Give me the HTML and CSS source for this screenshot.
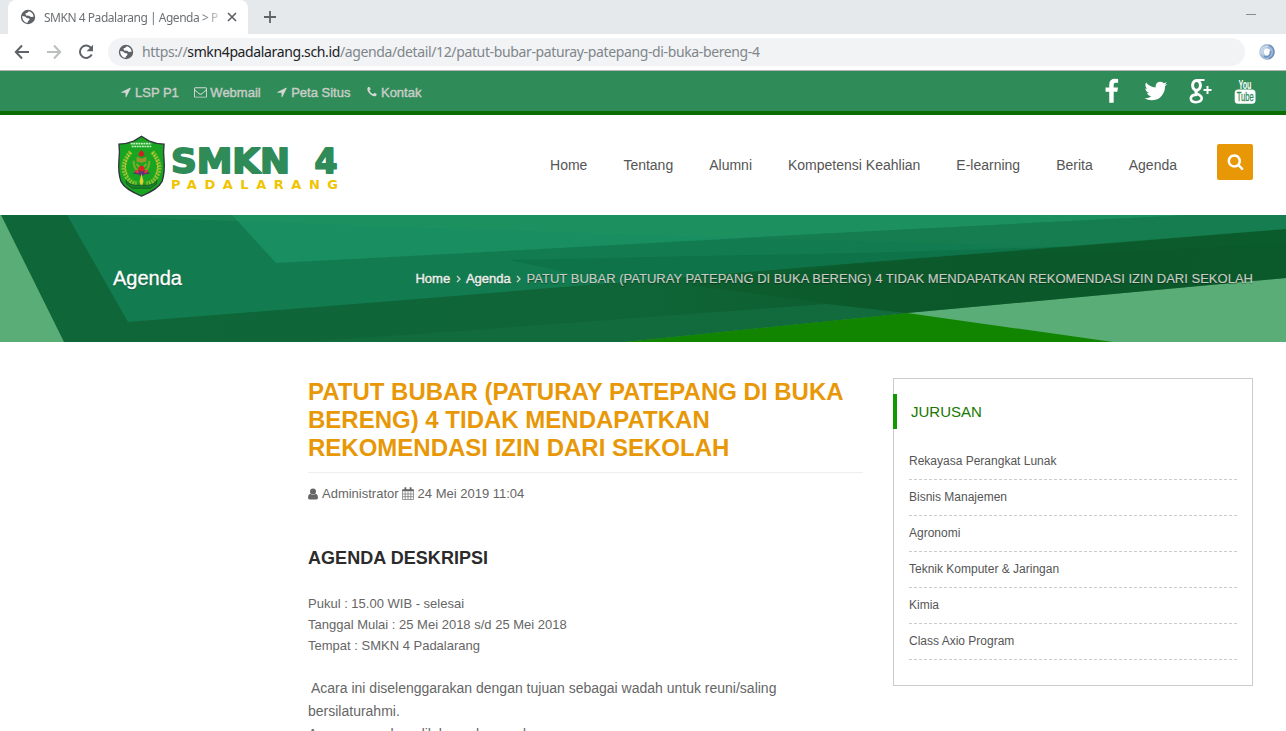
FILE: index.html
```html
<!DOCTYPE html>
<html lang="id">
<head>
<meta charset="utf-8">
<title>SMKN 4 Padalarang | Agenda</title>
<link rel="stylesheet" href="styles.css">
</head>
<body>
<svg class="defs" aria-hidden="true">
  <symbol id="globe" viewBox="0 0 16 16"><circle cx="8" cy="8" r="7.200" fill="#5f6368"/><path d="M2.200 7 5 7.600l2 1.600h2l.6 1.500-1.600 1.500-.5 1.600C4.600 13.700 2.200 11 2.200 7ZM8.800 2.200 7.400 3.800 5.400 4.600l.6 1.800 3.200.4 1.600 1.200 2.800-.2C13.500 5 11.500 2.600 8.800 2.200Z" fill="#fff"/></symbol>
  <symbol id="arrow" viewBox="0 0 1792 1792"><path d="M1593 349l-640 1280q-17 35-57 35-5 0-15-2-22-5-35.500-22.500t-13.500-39.500v-576h-576q-22 0-39.500-13.500t-22.500-35.500 4-42 29-30l1280-640q13-7 29-7 27 0 45 19 15 14 18.500 34.500t-6.500 39.500z"/></symbol>
  <symbol id="mail" viewBox="0 0 1792 1792"><path d="M1664 1504v-768q-32 36-69 66-268 206-426 338-51 43-83 67t-86.500 48.500-102.500 24.500h-2q-48 0-102.500-24.500t-86.500-48.500-83-67q-158-132-426-338-37-30-69-66v768q0 13 9.500 22.500t22.500 9.500h1472q13 0 22.500-9.500t9.500-22.500zm0-1051v-24.500l-.5-13-3-12.500-5.500-9-9-7.500-14-2.500h-1472q-13 0-22.500 9.500t-9.500 22.500q0 168 147 284 193 152 401 317 6 5 35 29.500t46 37.500 44.500 31.500 50.500 27.500 43 9h2q20 0 43-9t50.500-27.500 44.500-31.500 46-37.500 35-29.500q208-165 401-317 54-43 100.500-115.500t46.500-131.500zm128-37v1088q0 66-47 113t-113 47h-1472q-66 0-113-47t-47-113v-1088q0-66 47-113t113-47h1472q66 0 113 47t47 113z"/></symbol>
  <symbol id="phone" viewBox="0 0 1792 1792"><path d="M1600 1240q0 27-10 70.500t-21 68.500q-21 50-122 106-94 51-186 51-27 0-52.500-3.500t-57.500-12.500-47.500-14.500-55.500-20.500-49-18q-98-35-175-83-128-79-264.500-215.500t-215.500-264.500q-48-77-83-175-3-9-18-49t-20.500-55.500-14.500-47.500-12.500-57.500-3.500-52.500q0-92 51-186 56-101 106-122 25-11 68.500-21t70.500-10q14 0 21 3 18 6 53 76 11 19 30 54t35 63.500 31 53.500q3 4 17.500 25t21.500 35.500 7 28.500q0 20-28.500 50t-62 55-62 53-28.500 46q0 9 5 22.500t8.500 20.500 14 24 11.500 19q76 137 174 235t235 174q2 1 19 11.500t24 14 20.500 8.500 22.500 5q18 0 46-28.500t53-62 55-62 50-28.500q14 0 28.500 7t35.500 21.500 25 17.500q25 15 53.500 31t63.500 35 54 30q70 35 76 53 3 7 3 21z"/></symbol>
</svg>

<header class="browser">
  <div class="tabs">
    <div class="tab">
      <svg class="tab-globe"><use href="#globe"/></svg>
      <span class="tab-title">SMKN 4 Padalarang | Agenda &gt; P</span>
      <svg class="tab-close" viewBox="0 0 10 10"><path d="m1 1 8 8M9 1 1 9" stroke="#5f6368" stroke-width="1.700"/></svg>
    </div>
    <svg class="new-tab" viewBox="0 0 12 12"><path d="M6 0v12M0 6h12" stroke="#5f6368" stroke-width="1.800"/></svg>
    <span class="minimize"></span>
  </div>
  <div class="toolbar">
    <svg class="nav-icon" viewBox="0 0 16 16"><path d="M15 8H2M8 1.500 1.800 8 8 14.500" fill="none" stroke="#5f6368" stroke-width="2"/></svg>
    <svg class="nav-icon" viewBox="0 0 16 16"><path d="M1 8h13M8 1.500 14.200 8 8 14.500" fill="none" stroke="#bcbec0" stroke-width="2"/></svg>
    <svg class="nav-icon" viewBox="0 0 16 16"><path d="M13.200 4.200A6.200 6.200 0 1 0 13.700 10.500" fill="none" stroke="#5f6368" stroke-width="2"/><path d="M15 .8v6.400H8.600Z" fill="#5f6368"/></svg>
    <div class="address">
      <svg class="address-globe"><use href="#globe"/></svg>
      <span class="url">https://<b>smkn4padalarang.sch.id</b>/agenda/detail/12/patut-bubar-paturay-patepang-di-buka-bereng-4</span>
    </div>
    <svg class="extension" viewBox="0 0 16 16"><ellipse cx="8" cy="8" rx="5.400" ry="5.700" fill="none" stroke="#a3bcd9" stroke-width="4.600"/><path d="M10 1.200A7 7 0 0 1 10 14.500M5 12.500C9 14 12 11 11.500 7" fill="none" stroke="#6f92bd" stroke-width="1.700"/><path d="M2 10C1 5 5 1.500 9 2.500M4 11C3 7 5 4 8 4" fill="none" stroke="#d3e0ee" stroke-width="1.200"/></svg>
  </div>
</header>

<div class="topbar">
  <nav class="quick-links">
    <a><svg><use href="#arrow"/></svg>LSP P1</a>
    <a><svg class="wide"><use href="#mail"/></svg>Webmail</a>
    <a><svg><use href="#arrow"/></svg>Peta Situs</a>
    <a><svg><use href="#phone"/></svg>Kontak</a>
  </nav>
  <div class="social">
    <svg viewBox="0 0 1792 1792"><path transform="translate(110 50)" d="M1343 12v264h-157q-86 0-116 36t-30 108v189h293l-39 296h-254v759h-306v-759h-255v-296h255v-218q0-186 104-288.500t277-102.500q147 0 228 12z"/></svg>
    <svg viewBox="0 0 1792 1792"><path transform="translate(60 0)" d="M1684 408q-67 98-162 167 1 14 1 42 0 130-38 259.500t-115.500 248.500-184.500 210.500-258 146-323 54.500q-271 0-496-145 35 4 78 4 225 0 401-138-105-2-188-64.500t-114-159.500q33 5 61 5 43 0 85-11-112-23-185.500-111.500t-73.500-205.500v-4q68 38 146 41-66-44-105-115t-39-154q0-88 44-163 121 149 294.500 238.500t371.500 99.500q-8-38-8-74 0-134 94.500-228.500t228.500-94.500q140 0 236 102 109-21 205-78-37 115-142 178 93-10 186-50z"/></svg>
    <svg viewBox="0 0 26 26" class="gplus"><ellipse cx="9.500" cy="7.300" rx="3.900" ry="4.900" stroke-width="3"/><path d="M10 2h7.500" stroke-width="2"/><path d="M10.500 12.500c-2.500 1-2.500 2 0 3.300s4.800 2.500 4.200 5-2.700 3.400-5.700 3.400-5.200-1-5.200-3.600 2.500-4 6.500-4" stroke-width="2.600"/><path d="M16.500 12h8M20.500 8v8" stroke-width="2"/></svg>
    <svg viewBox="0 0 26 26"><text x="6.500" y="10.600" class="yt-you" textLength="13" lengthAdjust="spacingAndGlyphs">You</text><rect x="2.700" y="11.600" width="20.800" height="14.200" rx="3.500"/><text x="4.700" y="23.200" class="yt-tube" textLength="17" lengthAdjust="spacingAndGlyphs">Tube</text></svg>
  </div>
</div>

<div class="masthead">
  <svg class="logo" viewBox="0 0 224 66">
    <g transform="translate(0 .3) scale(.98)">
    <path d="M25 2 33 7q7 3 15 3-1 8 0 16 1 13-2 22Q42 56 25 63 8 56 4 48 1 39 2 26 3 18 2 10q8 0 15-3Z" fill="#19a521" stroke="#30363c" stroke-width="1.400"/>
    <path d="M14 18Q3 31 9 42q4 8 11 8M36 18Q47 31 41 42q-4 8-11 8" fill="none" stroke="#8dbf32" stroke-width="4.500" stroke-dasharray="2 1"/>
    <path d="M14 19Q5 31 11 42M36 19Q45 31 39 42" fill="none" stroke="#e4c52b" stroke-width="1.400" stroke-dasharray="1.500 1.500"/>
    <path d="M14 9.500h21M15 12.500h20" stroke="#c6efc4" stroke-width="1.600" stroke-dasharray="2 .6"/>
    <path d="M17 27q0 11 8 11t8-11M20 30q5 8 10 0" fill="none" stroke="#79ad29" stroke-width="2"/>
    <path d="m20 23 5 2 5-2v5l-5 1-5-1Z" fill="#98952c"/><path d="M25 16q3 3 3 5l-3 2-3-2q0-2 3-5Z" fill="#d11e20"/>
    <path d="m16 40 7-4 2-3 2 3 7 4-6 1-3 2-3-2Z" fill="#553779"/><circle cx="25" cy="35" r="3" fill="#e01f27"/><path d="m18.500 37 3.500 2M31.500 37l-3.500 2" stroke="#ee302e" stroke-width="2.400"/>
    <path d="m25 40 2 8-2 8-2-8Z" fill="#e4ce35"/>
    <path d="M9 47q4 5 9 5h14q5 0 9-5l-1 4-6 4H16l-6-4Z" fill="#13852a" stroke="#204c28" stroke-width=".8"/>
    </g>
    <text class="logo-main" x="54" y="39" textLength="119" lengthAdjust="spacingAndGlyphs">SMKN</text>
    <text class="logo-main" x="197.500" y="39" textLength="23" lengthAdjust="spacingAndGlyphs">4</text>
    <text class="logo-sub" x="54" y="54.500" textLength="167">PADALARANG</text>
  </svg>
  <nav class="menu"><a>Home</a><a>Tentang</a><a>Alumni</a><a>Kompetensi Keahlian</a><a>E-learning</a><a>Berita</a><a>Agenda</a></nav>
  <button class="search" aria-label="Cari"><svg viewBox="0 0 1792 1792"><path d="M1216 832q0-185-131.500-316.500t-316.500-131.500-316.500 131.500-131.500 316.500 131.500 316.500 316.500 131.500 316.500-131.500 131.500-316.500zm512 832q0 52-38 90t-90 38q-54 0-90-38l-343-342q-179 124-399 124-143 0-273.500-55.500t-225-150-150-225-55.500-273.500 55.500-273.500 150-225 225-150 273.500-55.500 273.500 55.500 225 150 150 225 55.500 273.500q0 220-124 399l343 343q37 37 37 90z"/></svg></button>
</div>

<section class="banner">
  <svg class="banner-art" viewBox="0 0 1286 127" preserveAspectRatio="none">
    <defs>
      <linearGradient id="deep"><stop offset="0" stop-color="#0f6639"/><stop offset=".5" stop-color="#0f6537"/><stop offset=".75" stop-color="#0b592b"/><stop offset="1" stop-color="#0b5c2d"/></linearGradient>
    </defs>
    <path d="M0 0h1286v127H0Z" fill="#5aad76"/>
    <path d="M1 0h1285v63L907 98 623 127H64Z" fill="url(#deep)"/>
    <path d="M623 127 907 98l206 29Z" fill="#118500"/>
    <path d="m300 127 130-9 396-29 81 9-284 29Z" fill="#126b3c"/>
    <path d="m690 70 166-21 430-20v34L907 98l-51-6Z" fill="#0b572a" opacity=".5"/>
    <path d="M67 0h1219v14L856 48 430 83 128 107Z" fill="#127b4f"/>
    <path d="m510 45 346-7 210-6-210 16-246 19Z" fill="#0d7046" opacity=".75"/>
    <path d="M232 0h958L856 17 430 40 276 48Z" fill="#188e61"/>
    <path d="M67 0h1123L856 17l-116 6-310-10Z" fill="#2a9660" opacity=".3"/>
    <path d="m740 23 116-6L1190 0h96v14l-220 18-210-6Z" fill="#1b8050" opacity=".45"/>
  </svg>
  <h1>Agenda</h1>
  <div class="crumbs"><a>Home</a><svg viewBox="0 0 5 8"><path d="m1 1 3 3-3 3"/></svg><a>Agenda</a><svg viewBox="0 0 5 8"><path d="m1 1 3 3-3 3"/></svg><span>PATUT BUBAR (PATURAY PATEPANG DI BUKA BERENG) 4 TIDAK MENDAPATKAN REKOMENDASI IZIN DARI SEKOLAH</span></div>
</section>

<main class="content">
  <article>
    <h2>PATUT BUBAR (PATURAY PATEPANG DI BUKA BERENG) 4 TIDAK MENDAPATKAN REKOMENDASI IZIN DARI SEKOLAH</h2>
    <div class="meta">
      <svg class="user" viewBox="0 0 10 12"><circle cx="5" cy="3.400" r="3"/><path d="M2.200 5.800Q0 6.500 0 9.500 0 11.500 1.500 11.500h7Q10 11.500 10 9.500q0-3-2.200-3.700Q5 7.700 2.200 5.800Z"/></svg><span>Administrator</span>
      <svg class="calendar" viewBox="0 0 12 13"><path d="M.5 2.500h11v10H.5ZM.5 7h11M.5 9.700h11M3.200 4.500v8M6 4.500v8M8.800 4.500v8" fill="none" stroke="#666" stroke-width=".65"/><path d="M.5 2.500h11v1.700H.5ZM2.500.3h1.800v3H2.500ZM7.700.3h1.800v3H7.700Z"/></svg><span>24 Mei 2019 11:04</span>
    </div>
    <h3>AGENDA DESKRIPSI</h3>
    <div class="details">Pukul : 15.00 WIB - selesai<br>Tanggal Mulai : 25 Mei 2018 s/d 25 Mei 2018<br>Tempat : SMKN 4 Padalarang</div>
    <p>Acara ini diselenggarakan dengan tujuan sebagai wadah untuk reuni/saling bersilaturahmi.<br>Acara yang akan dilaksanakan pada</p>
  </article>
  <aside>
    <h4>JURUSAN</h4>
    <ul><li>Rekayasa Perangkat Lunak</li><li>Bisnis Manajemen</li><li>Agronomi</li><li>Teknik Komputer &amp; Jaringan</li><li>Kimia</li><li>Class Axio Program</li></ul>
  </aside>
</main>
</body>
</html>
```

FILE: styles.css
```css
* { box-sizing: border-box; }
body { margin: 0; height: 731px; overflow: hidden; background: #fff; color: #666; font: 13px "Liberation Sans", Arial, sans-serif; }
svg { display: block; flex: none; }
.defs { position: absolute; width: 0; height: 0; }

.browser { height: 71px; border-bottom: 1px solid #b3b3b3; font-family: "Noto Sans", "Open Sans", sans-serif; }
.tabs { display: flex; height: 34px; background: #e5e9ec; padding-left: 8px; }
.tab { display: flex; align-items: center; width: 240px; height: 34px; padding-left: 12px; background: #fff; border-radius: 8px 8px 0 0; }
.tab-globe { width: 16px; height: 16px; }
.tab-title { width: 177px; margin-left: 8px; overflow: hidden; white-space: nowrap; font-size: 12px; letter-spacing: -.47px; color: #6c7074; mask-image: linear-gradient(90deg, #000 160px, transparent 181px); }
.tab-close { width: 10px; height: 10px; margin-left: 6px; }
.new-tab { width: 12px; height: 12px; margin: 11px 0 0 16px; }
.minimize { width: 10px; height: 1px; background: #888c90; margin: 14px 30px 0 auto; }
.toolbar { display: flex; align-items: center; height: 36px; padding: 0 11px 0 14px; }
.nav-icon { width: 16px; height: 16px; margin-right: 16px; }
.address { display: flex; align-items: center; width: 1137px; height: 28px; margin-left: -2px; padding-left: 10px; border-radius: 14px; background: #f1f3f4; }
.address-globe { width: 16px; height: 16px; }
.url { margin-left: 8px; white-space: nowrap; font-size: 14px; line-height: 18px; letter-spacing: -.37px; color: #80868b; }
.url b { font-weight: 400; color: #202124; }
.extension { width: 16px; height: 16px; margin-left: auto; }

.topbar { display: flex; justify-content: space-between; height: 44px; padding: 0 28px 0 120px; background: #2f8b58; border-bottom: 4px solid #0d6c00; }
.quick-links { display: flex; height: 42px; align-items: center; gap: 15.500px; color: #c9cdc8; -webkit-text-stroke: .4px #c9cdc8; }
.quick-links a { display: flex; align-items: center; gap: 3px; }
.quick-links svg { width: 12px; height: 14px; fill: #d5d8d4; stroke: none; }
.quick-links .wide { width: 13px; }
.social { display: flex; align-items: center; gap: 19px; }
.social svg { width: 26px; height: 26px; fill: #fff; }
.social .gplus { fill: none; stroke: #fff; }
.yt-you { font: 700 12.500px "Liberation Sans", sans-serif; }
.yt-tube { font: 400 12.500px "Liberation Sans", sans-serif; fill: #2f8b58; stroke: #2f8b58; stroke-width: .3; }

.masthead { display: flex; height: 100px; padding: 0 33px 0 117px; }
.logo { width: 224px; height: 66px; margin-top: 19px; overflow: visible; }
.logo-main { font: 700 33px "DejaVu Sans", sans-serif; fill: #2f8b58; stroke: #2f8b58; stroke-width: 1.800; stroke-linejoin: round; }
.logo-sub { font: 700 13px "DejaVu Sans", sans-serif; fill: #f0c400; }
.menu { display: flex; gap: 36px; margin: 42px 40px 0 auto; font-size: 14px; line-height: 17px; color: #555; }
.search { display: flex; align-items: center; justify-content: center; width: 36px; height: 36px; margin: 29px 0 0; padding: 0; border: 0; border-radius: 2px; background: #e89806; }
.search svg { width: 17px; height: 17px; margin-bottom: 2px; fill: #fff; }

.banner { display: flex; position: relative; align-items: center; justify-content: space-between; height: 127px; padding: 0 33px 0 113px; }
.banner-art { position: absolute; inset: 0; width: 100%; height: 100%; }
.banner h1 { position: relative; margin: 0; font-size: 20px; font-weight: 400; color: #fff; text-shadow: 0 1px 1px #0006; -webkit-text-stroke: .3px #fff; }
.crumbs { display: flex; position: relative; align-items: center; gap: 5.400px; white-space: nowrap; color: #c8ccc5; text-shadow: 0 1px 1px #0006; -webkit-text-stroke: .15px #c8ccc5; }
.crumbs span { letter-spacing: .015px; }
.crumbs a { color: #e9eee9; -webkit-text-stroke: .45px #e9eee9; }
.crumbs svg { width: 5px; height: 8px; fill: none; stroke: #d0d6d0; stroke-width: 1.300; }

.content { display: flex; align-items: flex-start; gap: 30px; padding: 36px 33px 0 308px; }
article { width: 555px; }
h2 { margin: 0; padding-bottom: 10px; border-bottom: 1px solid #eee; font-size: 24px; line-height: 28px; color: #e89806; }
.meta { display: flex; align-items: center; height: 15px; margin-top: 13px; white-space: nowrap; }
.meta svg { fill: #666; }
.user { width: 10px; height: 12px; margin-right: 4px; }
.calendar { width: 12px; height: 13px; margin: 0 4px 0 3px; }
h3 { margin: 47px 0 0; font-size: 18px; line-height: 20px; letter-spacing: .05px; color: #2b2b2b; }
.details { margin-top: 25px; line-height: 21px; }
article p { margin: 21px 0 0; font-size: 14px; line-height: 23px; text-indent: 3px; }
aside { width: 360px; height: 308px; padding: 15px 15px 0; border: 1px solid #ccc; }
h4 { margin: 0 0 0 -16px; height: 35px; padding-left: 14px; border-left: 4px solid #119a00; font-size: 15px; font-weight: 400; line-height: 35px; color: #167800; }
ul { margin: 15px 0 0; padding: 0; list-style: none; }
li { height: 36px; border-bottom: 1px dashed #ccc; font-size: 12px; line-height: 35px; color: #555; }
```
